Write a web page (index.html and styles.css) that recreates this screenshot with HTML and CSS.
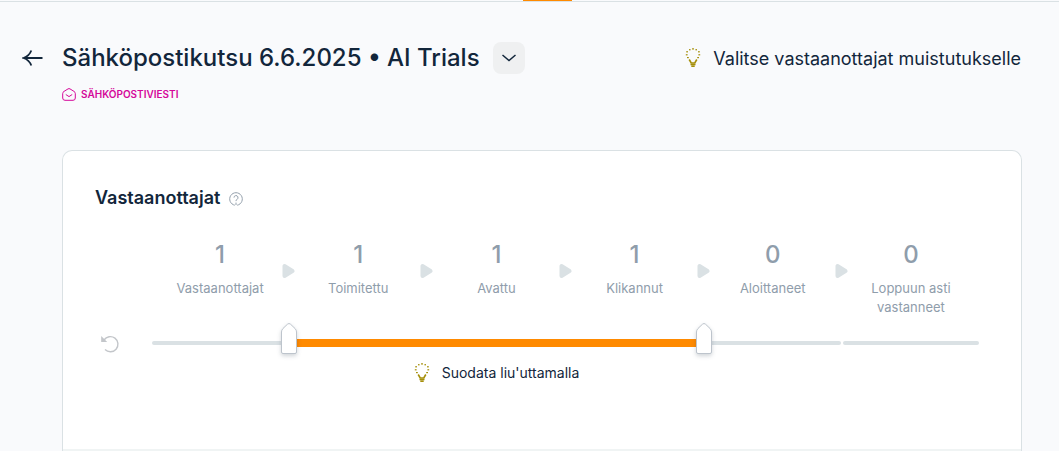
FILE: index.html
```html
<!DOCTYPE html>
<html lang="fi">
<head>
<meta charset="utf-8">
<title>Sähköpostikutsu</title>
<link rel="stylesheet" href="styles.css">
</head>
<body>
<svg class="defs" aria-hidden="true">
  <symbol id="bulb" viewBox="0 0 16 20">
    <g fill="none" stroke="currentColor" stroke-width="1.6">
      <path d="M4.200 11.500 6.200 15h3.600l2-3.500"/>
      <path d="M5.500 16.500h5M6.300 18.300h3.400"/>
    </g>
    <g fill="currentColor">
      <rect x="7.300" y="0" width="1.400" height="1.700"/>
      <rect x="4.100" y="1" width="1.400" height="1.400"/>
      <rect x="10.500" y="1" width="1.400" height="1.400"/>
      <rect x="1.200" y="3.200" width="1.800" height="1.200"/>
      <rect x="13" y="3.200" width="1.800" height="1.200"/>
      <rect x="0.800" y="6.200" width="1.800" height="1.200"/>
      <rect x="13.400" y="6.200" width="1.800" height="1.200"/>
      <rect x="2" y="9" width="1.800" height="1.200"/>
      <rect x="12.200" y="9" width="1.800" height="1.200"/>
    </g>
  </symbol>
  <symbol id="play" viewBox="0 0 13 16">
    <path d="M2.500 3v10L10.500 8z" fill="#dae1e4" stroke="#dae1e4" stroke-width="4" stroke-linejoin="round"/>
  </symbol>
</svg>
<nav class="tabs"><span class="tab-active"></span></nav>
<main class="page">
  <header class="header">
    <a class="back" href="#" aria-label="Takaisin">
      <svg width="22" height="18" viewBox="0 0 22 18" fill="none" stroke="currentColor" stroke-width="1.8"><path d="M20.500 9H2M9.300 1.500C8 5 5 7.800 1.500 9c3.500 1.200 6.500 4 7.800 7.500"/></svg>
    </a>
    <div class="heading">
      <div class="title-row">
        <h1>Sähköpostikutsu 6.6.2025 • AI Trials</h1>
        <button class="more" aria-label="Lisää">
          <svg width="16" height="10" viewBox="0 0 16 10" fill="none" stroke="currentColor" stroke-width="1.5"><path d="M1.500 2 8 7.500 14.500 2"/></svg>
        </button>
      </div>
      <div class="kind">
        <svg width="14" height="13" viewBox="0 0 14 13" fill="none" stroke="currentColor"><path d="M2 3.400 6 .900q1-.6 2 0l4 2.500q1.300.8 1.300 2.100V10q0 2.300-2.300 2.300H3Q.7 12.300.7 10V5.500Q.7 4.200 2 3.400z"/><path d="M3.800 6.500 7 8.600l3.200-2.100"/></svg>
        <span>SÄHKÖPOSTIVIESTI</span>
      </div>
    </div>
    <div class="tip">
      <svg class="bulb" width="16" height="20"><use href="#bulb"/></svg>
      <span>Valitse vastaanottajat muistutukselle</span>
    </div>
  </header>
  <section class="card">
    <div class="filter">
      <div class="card-title">
        <h2>Vastaanottajat</h2>
        <button class="help" aria-label="Ohje">
          <svg width="14" height="14" viewBox="0 0 14 14" fill="none" stroke="currentColor"><path d="M5.800 13.200A6.300 6.300 0 1 1 8.200 13.200"/><path d="M5 5.600a2 2 0 1 1 3 1.700Q7 7.900 7 9.100M7 10.600v2.400"/></svg>
        </button>
      </div>
      <div class="funnel">
        <button class="reset" aria-label="Palauta">
          <svg width="20" height="18" viewBox="0 0 20 18" fill="none" stroke="currentColor" stroke-width="1.400"><path d="M4 5A7.600 7.600 0 1 1 5 14.600"/><path d="M1.200 1v6h6z" fill="currentColor" stroke="none"/></svg>
        </button>
        <div class="funnel-main">
          <ol class="steps">
            <li><strong>1</strong><span>Vastaanottajat</span><svg class="play" width="13" height="16"><use href="#play"/></svg></li>
            <li><strong>1</strong><span>Toimitettu</span><svg class="play" width="13" height="16"><use href="#play"/></svg></li>
            <li><strong>1</strong><span>Avattu</span><svg class="play" width="13" height="16"><use href="#play"/></svg></li>
            <li><strong>1</strong><span>Klikannut</span><svg class="play" width="13" height="16"><use href="#play"/></svg></li>
            <li><strong>0</strong><span>Aloittaneet</span><svg class="play" width="13" height="16"><use href="#play"/></svg></li>
            <li><strong>0</strong><span>Loppuun asti vastanneet</span></li>
          </ol>
          <div class="slider">
            <i class="seg"></i><i class="seg on"></i><i class="seg on"></i><i class="seg on"></i><i class="seg"></i><i class="seg"></i>
            <input class="range" type="range" min="0" max="6" value="1" aria-label="Suodatuksen alku">
            <input class="range" type="range" min="0" max="6" value="4" aria-label="Suodatuksen loppu">
          </div>
          <div class="hint-row">
            <p class="hint"><svg class="bulb" width="16" height="20"><use href="#bulb"/></svg><span>Suodata liu'uttamalla</span></p>
          </div>
        </div>
      </div>
    </div>
  </section>
</main>
</body>
</html>
```
FILE: styles.css
```css
* { box-sizing: border-box; }
body {
  margin: 0;
  background: #f9fafc;
  color: #12263b;
  font-family: Inter, "Liberation Sans", sans-serif;
}
h1, h2, p, ol { margin: 0; padding: 0; }
svg { display: block; flex: none; }
button { border: 0; padding: 0; background: none; color: inherit; font: inherit; cursor: pointer; }
.defs { position: absolute; width: 0; height: 0; }
.tabs {
  display: flex;
  justify-content: center;
  height: 2px;
  padding-left: 36px;
  border-bottom: 1px solid #dae1e4;
}
.tab-active { width: 49px; background: #ff8a00; }
.page { padding: 40px 37px 0 22px; }
.header { display: flex; align-items: flex-start; }
.back { display: flex; align-items: center; width: 40px; height: 32px; color: inherit; }
.heading { flex: 1; }
.title-row { display: flex; align-items: center; gap: 13px; height: 32px; }
h1 { font-size: 24px; line-height: 32px; font-weight: 500; white-space: nowrap; }
.more {
  display: flex;
  align-items: center;
  justify-content: center;
  width: 32px;
  height: 32px;
  border-radius: 8px;
  background: #eff0f1;
}
.kind {
  display: flex;
  align-items: center;
  gap: 5px;
  margin-top: 12px;
  color: #d5089a;
  font-size: 10px;
  line-height: 16px;
  font-weight: 600;
}
.tip { display: flex; align-items: center; gap: 12px; height: 32px; padding-right: 1px; font-size: 18px; white-space: nowrap; }
.bulb { color: #a58f0a; }
.card {
  margin: 48px 0 0 40px;
  border: 1px solid #dae1e4;
  border-bottom: 0;
  border-radius: 10px 10px 0 0;
  background: #fff;
}
.filter { padding: 35px 41px 66px 32px; border-bottom: 2px solid #f0f4f4; }
.card-title { display: flex; align-items: center; gap: 9px; }
h2 { font-size: 18px; line-height: 24px; font-weight: 600; }
.help { color: #94a0ac; padding-top: 2px; }
.funnel { display: flex; align-items: flex-start; margin-top: 29px; }
.reset { width: 56px; padding: 96px 0 0 5px; color: #c3c6ca; }
.funnel-main { flex: 1; }
.steps { display: grid; grid-template-columns: repeat(6, 1fr); list-style: none; }
.steps li {
  position: relative;
  display: flex;
  flex-direction: column;
  align-items: center;
  gap: 8px;
  padding: 0 24px;
  color: #8f9dab;
  text-align: center;
}
.steps strong { font-size: 24px; line-height: 32px; font-weight: 500; }
.steps span { font-size: 13px; line-height: 19px; }
.play { position: absolute; right: -6px; top: 24px; }
.slider {
  position: relative;
  display: grid;
  grid-template-columns: repeat(6, 1fr);
  align-items: center;
  height: 32px;
  margin-top: 10px;
}
.seg { height: 4px; margin: 0 1px; border-radius: 2px; background: #dae1e4; }
.seg.on { height: 8px; margin: 0; border-radius: 0; background: #ff8a00; }
.range {
  position: absolute;
  left: -8px;
  top: -5px;
  width: calc(100% + 16px);
  height: 38px;
  margin: 0;
  appearance: none;
  background: none;
  pointer-events: none;
}
.range::-webkit-slider-thumb {
  appearance: none;
  width: 16px;
  height: 38px;
  pointer-events: auto;
  background: url("data:image/svg+xml,%3Csvg xmlns='http://www.w3.org/2000/svg' width='16' height='38'%3E%3Cpath d='M.5 10Q.5 8 2 6.500L6.500 2.200Q8 .8 9.500 2.200L14 6.500Q15.500 8 15.500 10V30Q15.500 31.500 14 31.500H2Q.5 31.500.5 30z' fill='white' stroke='%23bdc4cc'/%3E%3C/svg%3E") no-repeat;
  filter: drop-shadow(0 2px 2px rgba(18, 38, 59, 0.2));
}
.hint-row { display: flex; justify-content: center; padding-right: 138px; margin-top: 4px; }
.hint { display: flex; align-items: center; gap: 12px; font-size: 14px; line-height: 20px; }
```
